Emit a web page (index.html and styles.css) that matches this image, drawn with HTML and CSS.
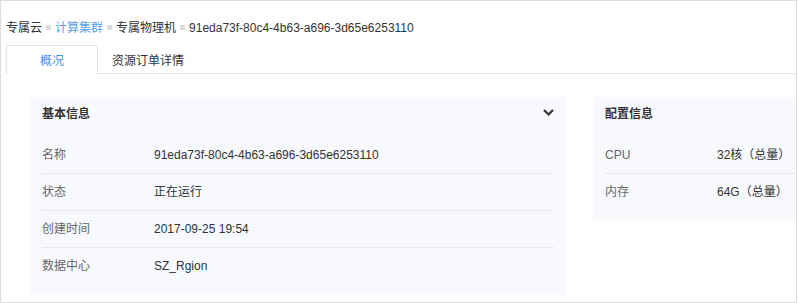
FILE: index.html
```html
<!DOCTYPE html>
<html lang="zh-CN">
<head>
    <meta charset="UTF-8">
    <meta name="viewport" content="width=device-width, initial-scale=1.0">
    <title>专属物理机详情</title>
    <link rel="stylesheet" href="styles.css">
</head>
<body>
    <div class="frame">
        <div class="breadcrumb">
            <span>专属云</span>
            <span class="sep"></span>
            <a href="#" class="crumb-link">计算集群</a>
            <span class="sep"></span>
            <span>专属物理机</span>
            <span class="sep"></span>
            <span>91eda73f-80c4-4b63-a696-3d65e6253110</span>
        </div>

        <div class="tabs">
            <div class="tab active">概况</div>
            <div class="tab">资源订单详情</div>
        </div>

        <div class="content">
            <div class="panel">
                <div class="panel-header">
                    <span class="panel-title">基本信息</span>
                    <svg class="chevron" width="11" height="7" viewBox="0 0 11 7">
                        <polyline points="1,1 5.5,5.5 10,1" fill="none" stroke="#333" stroke-width="2.2"/>
                    </svg>
                </div>
                <div class="rows">
                    <div class="row"><span class="label">名称</span><span class="value">91eda73f-80c4-4b63-a696-3d65e6253110</span></div>
                    <div class="row"><span class="label">状态</span><span class="value">正在运行</span></div>
                    <div class="row"><span class="label">创建时间</span><span class="value">2017-09-25 19:54</span></div>
                    <div class="row"><span class="label">数据中心</span><span class="value">SZ_Rgion</span></div>
                </div>
            </div>

            <div class="panel short">
                <div class="panel-header">
                    <span class="panel-title">配置信息</span>
                </div>
                <div class="rows">
                    <div class="row"><span class="label">CPU</span><span class="value">32核（总量）</span></div>
                    <div class="row"><span class="label">内存</span><span class="value">64G（总量）</span></div>
                </div>
            </div>
        </div>
    </div>
</body>
</html>
```

FILE: styles.css
```css
body {
    margin: 0;
    font-family: "Liberation Sans", "Noto Sans CJK SC", sans-serif;
    font-size: 12px;
    color: #333;
    background-color: #fff;
}

.frame {
    width: 797px;
    height: 303px;
    box-sizing: border-box;
    border: 1px solid #dcdcdc;
    overflow: hidden;
}

/* breadcrumb */
.breadcrumb {
    height: 44px;
    box-sizing: border-box;
    padding: 9px 5px 0;
    line-height: 20px;
    display: flex;
    align-items: center;
    align-self: flex-start;
}

.breadcrumb .crumb-link {
    color: #5a9ee6;
    text-decoration: none;
}

.breadcrumb .sep {
    width: 5px;
    height: 5px;
    border-radius: 1px;
    background-color: #d8dbe0;
    margin: 0 4px;
}

/* tabs */
.tabs {
    display: flex;
    margin-left: 5px;
    height: 28px;
    border-bottom: 1px solid #dde1e8;
}

.tab {
    min-width: 92px;
    height: 29px;
    box-sizing: border-box;
    padding: 2px 13px 0;
    line-height: 26px;
    text-align: center;
    border: 1px solid transparent;
    border-bottom: none;
}

.tab.active {
    color: #4a8fe7;
    border-color: #dde1e8;
    background-color: #fff;
}

/* panels */
.content {
    display: flex;
    align-items: flex-start;
    gap: 27px;
    padding: 23px 0 0 29px;
}

.panel {
    flex: 0 0 536px;
    box-sizing: border-box;
    padding: 0 12px 11px;
    background-color: #f7f9fd;
}

.panel-header {
    height: 30px;
    display: flex;
    align-items: center;
    justify-content: space-between;
}

.panel-title {
    font-weight: bold;
}

.chevron {
    display: block;
}

.rows {
    margin-top: 10px;
}

.row {
    display: flex;
    height: 37px;
    line-height: 36px;
    box-sizing: border-box;
    border-bottom: 1px solid #e3e7ee;
}

.row:last-child {
    border-bottom: none;
    height: 36px;
}

.row .label {
    width: 112px;
    flex-shrink: 0;
    color: #666;
}

.row .value {
    color: #333;
}
```
